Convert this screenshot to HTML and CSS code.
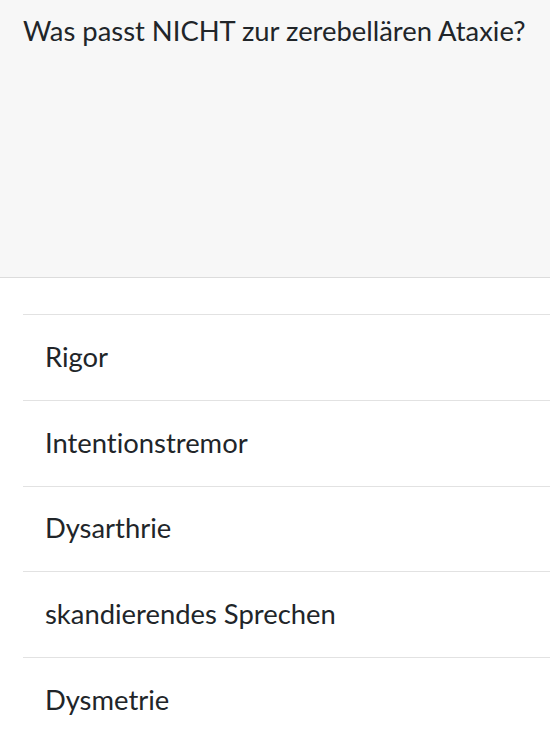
FILE: index.html
```html
<!DOCTYPE html>
<html lang="de">
<head>
<meta charset="utf-8">
<title>Quiz</title>
<link rel="stylesheet" href="styles.css">
</head>
<body>
<header class="question">
  <h1 class="question-text">Was passt NICHT zur zerebellären Ataxie?</h1>
</header>
<ul class="answers">
  <li class="answer">Rigor</li>
  <li class="answer">Intentionstremor</li>
  <li class="answer">Dysarthrie</li>
  <li class="answer">skandierendes Sprechen</li>
  <li class="answer">Dysmetrie</li>
</ul>
</body>
</html>
```

FILE: styles.css
```css
html, body {
  margin: 0;
  padding: 0;
  background: #ffffff;
  font-family: Lato, "Liberation Sans", sans-serif;
  color: #212529;
  font-variant-ligatures: none;
}

.question {
  box-sizing: border-box;
  height: 278px;
  background: #f7f7f7;
  border-bottom: 1px solid #dcdcdc;
  padding: 15px 10px 0 23px;
}

.question-text {
  margin: 0;
  font-size: 27.4px;
  font-weight: 400;
  line-height: 1.2;
}

.answers {
  list-style: none;
  margin: 36px 0 0 23px;
  padding: 0;
}

.answer {
  border-top: 1px solid #e2e2e2;
  padding: 0 22px;
  height: 84.75px;
  display: flex;
  align-items: center;
  font-size: 27.4px;
  line-height: 1.2;
}
```
